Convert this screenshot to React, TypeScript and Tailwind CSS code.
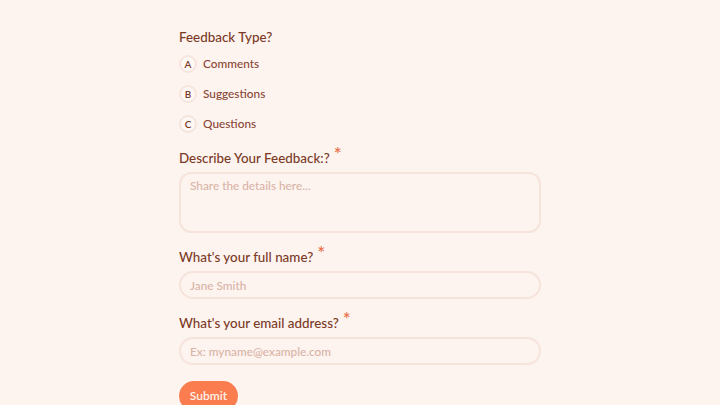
const options = [
  { key: "A", label: "Comments" },
  { key: "B", label: "Suggestions" },
  { key: "C", label: "Questions" },
]

const Label = ({ text }: { text: string }) => (
  <div className="flex h-[20px] items-center text-[13.4px] font-medium text-[#7b3a26]">
    <span>{text}</span>
    <span className="ml-[4px] -mt-[9px] text-[19px] leading-none text-[#e9714b]">*</span>
  </div>
)

export default function App() {
  return (
    <div
      className="h-[405px] w-[720px] overflow-hidden bg-[#fdf4f0]"
      style={{ fontFamily: "Lato, 'Noto Sans', sans-serif" }}
    >
      <form className="mx-auto flex w-[362px] flex-col pt-[27px]" onSubmit={(e) => e.preventDefault()}>
        <div className="flex h-[20px] items-center text-[13.4px] font-medium text-[#7b3a26]">Feedback Type?</div>

        <div className="mt-[2px] flex flex-col">
          {options.map((o) => (
            <label key={o.key} className="flex h-[30px] cursor-pointer items-center gap-[6px]">
              <span className="flex h-[18px] w-[18px] items-center justify-center rounded-full border-2 border-[#f6e5dd] bg-[#fef8f5] text-[10px] font-semibold text-[#7b3a26]">
                {o.key}
              </span>
              <span className="text-[11.8px] font-medium text-[#8a4634]">{o.label}</span>
            </label>
          ))}
        </div>

        <div className="mt-[9px]">
          <Label text="Describe Your Feedback:?" />
        </div>
        <textarea
          placeholder="Share the details here..."
          className="mt-[4px] h-[61px] w-full resize-none rounded-[12px] border-2 border-[#f6e3db] bg-[#fdf4f0] px-[9px] py-[3px] text-[11.8px] font-medium text-[#7b3a26] outline-none placeholder:text-[#d9b3a6]"
        />

        <div className="mt-[14px]">
          <Label text="What's your full name?" />
        </div>
        <input
          placeholder="Jane Smith"
          className="mt-[4px] h-[28px] w-full rounded-full border-2 border-[#f6e3db] bg-[#fdf4f0] px-[9px] text-[11.8px] font-medium text-[#7b3a26] outline-none placeholder:text-[#d9b3a6]"
        />

        <div className="mt-[14px]">
          <Label text="What's your email address?" />
        </div>
        <input
          placeholder="Ex: myname@example.com"
          className="mt-[4px] h-[28px] w-full rounded-full border-2 border-[#f6e3db] bg-[#fdf4f0] px-[9px] text-[11.8px] font-medium text-[#7b3a26] outline-none placeholder:text-[#d9b3a6]"
        />

        <div className="mt-[16px]">
          <button
            type="submit"
            className="h-[30px] w-[59px] rounded-full bg-[#fa7c4f] text-[12px] font-semibold text-[#fff1ea]"
          >
            Submit
          </button>
        </div>
      </form>
    </div>
  )
}
